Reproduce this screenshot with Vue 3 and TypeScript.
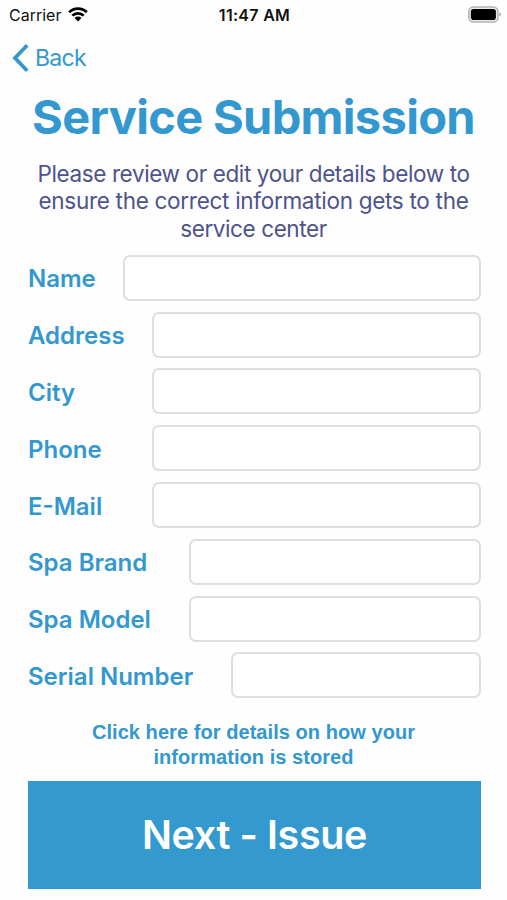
<script setup lang="ts">
import { reactive } from 'vue'

interface Field {
  key: string
  label: string
  size: string
}

const fields: Field[] = [
  { key: 'name', label: 'Name', size: 'short' },
  { key: 'address', label: 'Address', size: 'regular' },
  { key: 'city', label: 'City', size: 'regular' },
  { key: 'phone', label: 'Phone', size: 'regular' },
  { key: 'email', label: 'E-Mail', size: 'regular' },
  { key: 'brand', label: 'Spa Brand', size: 'wide' },
  { key: 'model', label: 'Spa Model', size: 'wide' },
  { key: 'serial', label: 'Serial Number', size: 'widest' },
]

const values = reactive<Record<string, string>>({})
</script>

<template>
  <main class="screen">
    <header class="status">
      <div class="carrier">
        <span>Carrier</span>
        <svg class="wifi" viewBox="0 0 20 15" aria-hidden="true">
          <path d="M1.2 5.2a12.6 12.6 0 0 1 17.6 0M4.3 8.6a8.2 8.2 0 0 1 11.4 0" fill="none" stroke="#000" stroke-width="2.7" />
          <path d="M6.5 11a5 5 0 0 1 7 0L10 14.5z" fill="#000" />
        </svg>
      </div>
      <span class="clock">11:47 AM</span>
      <svg class="battery" viewBox="0 0 34 17" aria-hidden="true">
        <rect x="0.9" y="0.9" width="29" height="15.2" rx="4.6" fill="#ececec" stroke="#b2b2b2" stroke-width="1.5" />
        <rect x="2.9" y="2.9" width="25" height="11.2" rx="2.8" fill="#000" />
        <path d="M31.3 6.2q1.6.6 1.6 2.2t-1.6 2.2z" fill="#a8a8a8" />
      </svg>
    </header>

    <nav class="nav">
      <button class="back" type="button">
        <svg class="chevron" viewBox="0 0 18 30" aria-hidden="true">
          <path d="M16.2 2.2 4 15l12.2 12.8" fill="none" stroke="#3398cf" stroke-width="3.8" />
        </svg>
        <span>Back</span>
      </button>
    </nav>

    <h1 class="title">Service Submission</h1>
    <p class="intro">
      <span class="first">Please review or edit your details below to</span><br />
      <span>ensure the correct information gets to the</span><br />
      <span class="last">service center</span>
    </p>

    <form class="form" @submit.prevent>
      <div v-for="f in fields" :key="f.key" class="row" :class="f.size">
        <label :for="f.key">{{ f.label }}</label>
        <input :id="f.key" v-model="values[f.key]" type="text" />
      </div>
    </form>

    <a class="privacy">Click here for details on how your<br />information is stored</a>
    <button class="next" type="button">Next - Issue</button>
  </main>
</template>

<style>
body {
  background: #fefefe;
}
</style>

<style scoped>
.screen {
  box-sizing: border-box;
  width: 507px;
  height: 900px;
  overflow: hidden;
  display: flex;
  flex-direction: column;
  font-family: Inter, "Liberation Sans", sans-serif;
  color: #3398cf;
}
.status {
  display: grid;
  grid-template-columns: 1fr auto 1fr;
  align-items: center;
  height: 30px;
  padding: 0 5px 0 9px;
  box-sizing: border-box;
  color: #111;
  font-size: 16px;
}
.carrier {
  display: flex;
  align-items: center;
  gap: 7px;
}
.wifi {
  width: 20px;
  height: 15px;
  margin-bottom: 1px;
}
.clock {
  font-weight: 600;
  letter-spacing: 0.3px;
  margin-right: 2px;
}
.battery {
  justify-self: end;
  width: 34px;
  height: 17px;
  margin-bottom: 2px;
}
.nav {
  height: 56px;
  display: flex;
  align-items: center;
  padding-left: 11px;
}
button {
  border: 0;
  padding: 0;
  margin: 0;
  font-family: inherit;
  color: inherit;
  background: none;
}
.back {
  display: flex;
  align-items: center;
  gap: 6px;
  font-size: 23px;
  letter-spacing: -0.7px;
}
.chevron {
  width: 18px;
  height: 30px;
}
.title {
  margin: 1px 0 0;
  height: 60px;
  line-height: 60px;
  font-size: 47px;
  font-weight: 700;
  letter-spacing: -0.68px;
  text-align: center;
  white-space: nowrap;
}
.intro {
  margin: 13px 0 0;
  font-size: 22.5px;
  line-height: 27.3px;
  letter-spacing: -0.29px;
  text-align: center;
  white-space: nowrap;
  color: #4d538c;
}
.first {
  letter-spacing: -0.38px;
}
.last {
  letter-spacing: -0.4px;
}
.form {
  margin: 13px 26px 0 28px;
  display: flex;
  flex-direction: column;
  gap: 10.8px;
}
.row {
  display: grid;
  grid-template-columns: 124px 1fr;
  align-items: center;
  height: 46px;
}
.short {
  grid-template-columns: 95px 1fr;
}
.wide {
  grid-template-columns: 161px 1fr;
}
.widest {
  grid-template-columns: 203px 1fr;
}
label {
  padding-top: 2px;
  font-size: 24px;
  font-weight: 600;
  white-space: nowrap;
}
input {
  box-sizing: border-box;
  width: 100%;
  min-width: 0;
  height: 46px;
  padding: 0 12px;
  border: 2px solid #dedede;
  border-radius: 7px;
  background: #fff;
  font: 22px Inter, sans-serif;
  outline: none;
}
.privacy {
  margin-top: 22px;
  font: bold 20px/25px "Liberation Sans", sans-serif;
  letter-spacing: 0.06px;
  text-align: center;
}
.next {
  margin: 11px 26px 0 28px;
  height: 108px;
  background: #3399cf;
  color: #fff;
  font-size: 39.5px;
  font-weight: 600;
  letter-spacing: -0.4px;
}
</style>
